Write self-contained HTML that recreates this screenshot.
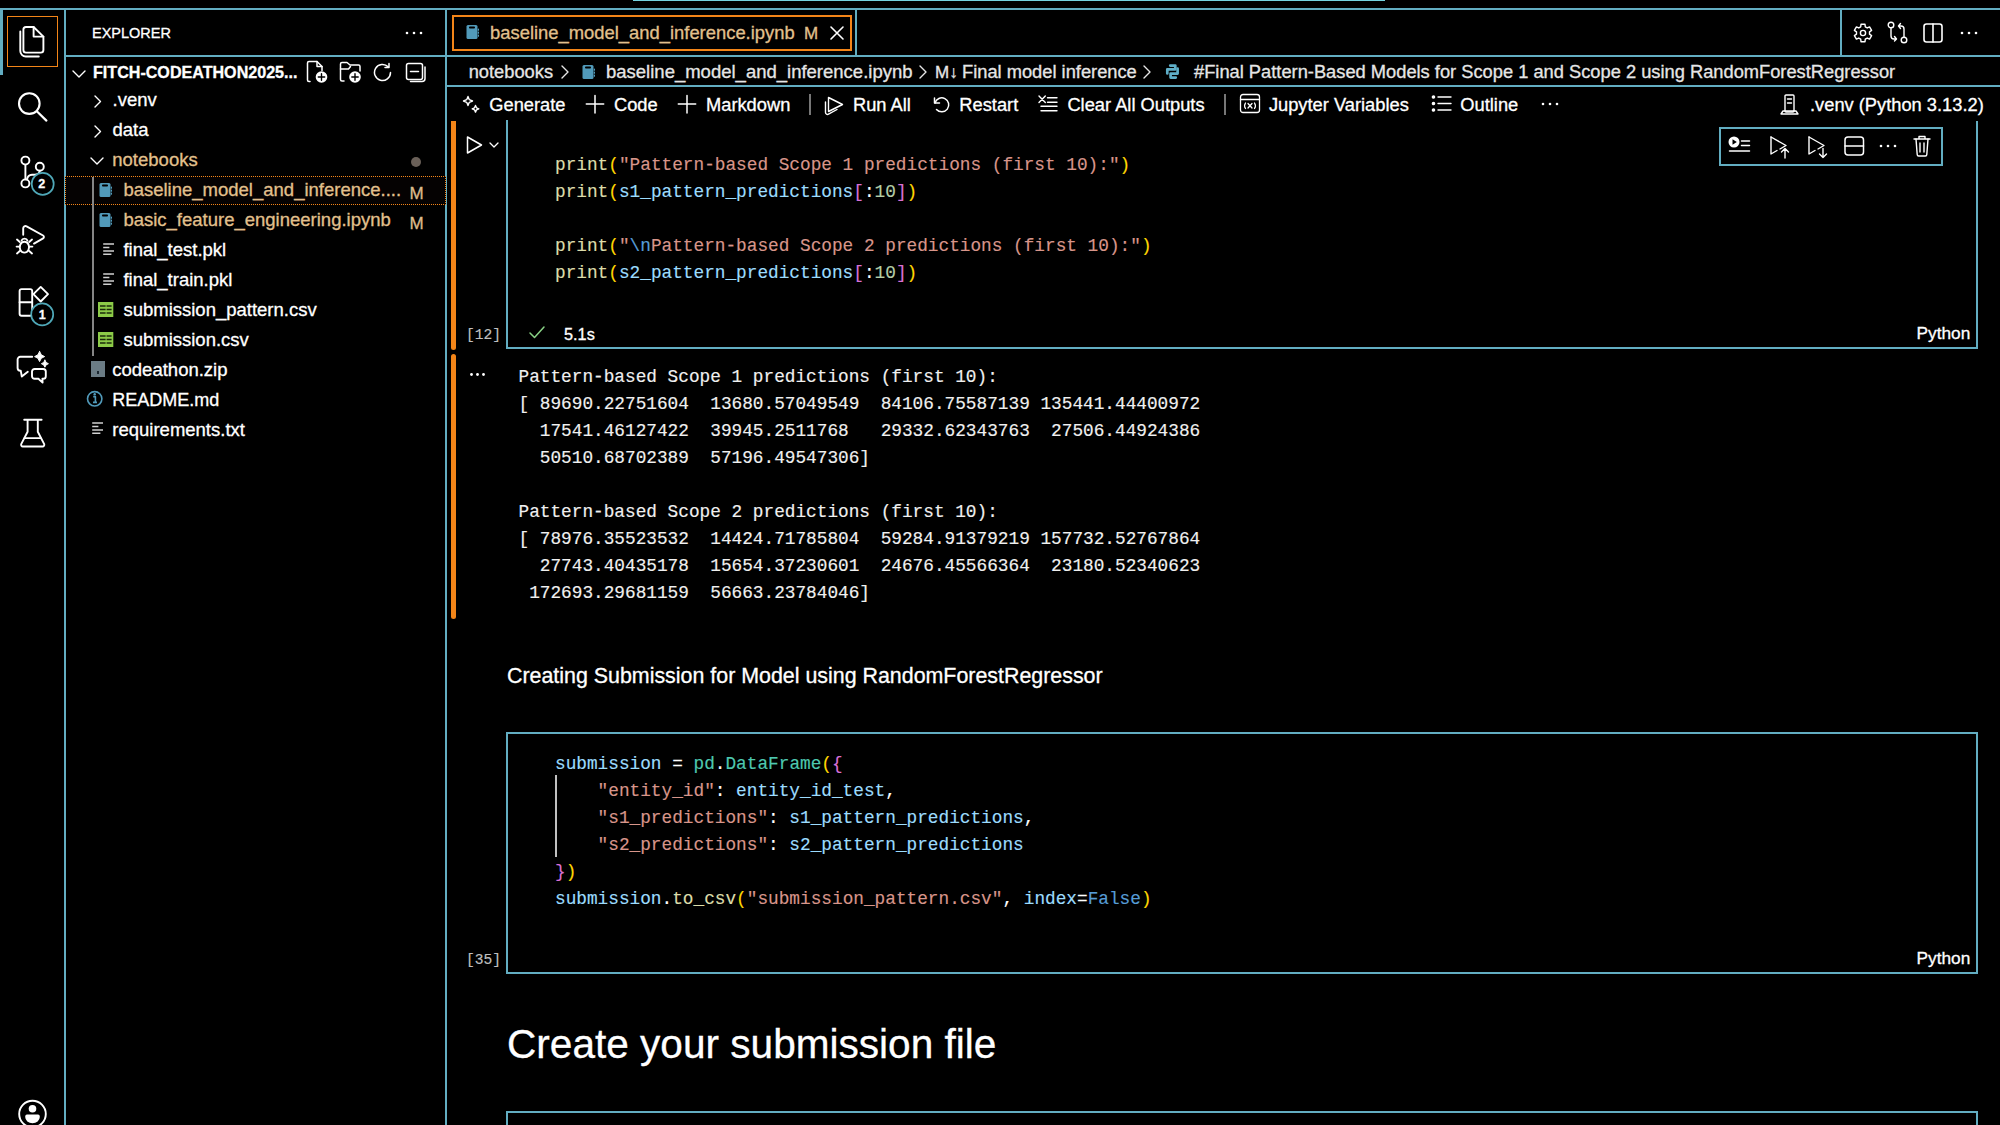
<!DOCTYPE html>
<html><head><meta charset="utf-8"><style>
html,body{margin:0;padding:0;width:2000px;height:1125px;overflow:hidden;background:#000;}
.t{position:absolute;white-space:pre;font-family:"Liberation Sans",sans-serif;line-height:1;-webkit-text-stroke:0.3px currentColor;}
.m{position:absolute;white-space:pre;font-family:"Liberation Mono",monospace;line-height:1;-webkit-text-stroke:0.15px currentColor;}
</style></head><body>
<div style="position:absolute;left:633px;top:0px;width:752px;height:1px;background:#75D3E0;"></div>
<div style="position:absolute;left:0px;top:8px;width:2000px;height:2px;background:#62ADC1;"></div>
<div style="position:absolute;left:64px;top:8px;width:2px;height:1117px;background:#62ADC1;"></div>
<div style="position:absolute;left:445px;top:8px;width:2px;height:1117px;background:#62ADC1;"></div>
<div style="position:absolute;left:64px;top:55px;width:1936px;height:2px;background:#62ADC1;"></div>
<div style="position:absolute;left:855px;top:8px;width:2px;height:48px;background:#62ADC1;"></div>
<div style="position:absolute;left:1840px;top:8px;width:2px;height:48px;background:#62ADC1;"></div>
<div style="position:absolute;left:445px;top:85px;width:1555px;height:2px;background:#62ADC1;"></div>
<div style="position:absolute;left:0px;top:9px;width:3px;height:66px;background:#62ADC1;"></div>
<div style="position:absolute;left:7px;top:16px;width:49px;height:49px;border:1.6px solid #F38518"></div>
<svg style="position:absolute;left:0;top:0" width="64" height="1125" viewBox="0 0 64 1125" fill="none" stroke="#fff" stroke-width="1.9" stroke-linecap="round" stroke-linejoin="round"><path d="M26 27h7.6l9.8 9.6V50a2.6 2.6 0 0 1-2.6 2.6H26a2.6 2.6 0 0 1-2.6-2.6V29.6A2.6 2.6 0 0 1 26 27z"/><path d="M33.6 27v9.6h9.8"/><path d="M20.3 31.5v19.5a5.5 5.5 0 0 0 5.5 5.5h13"/><circle cx="29.3" cy="103.6" r="10.3" stroke-width="2.1"/><path d="M36.8 111.2l9.6 9.4" stroke-width="2.2"/><circle cx="25.4" cy="160.6" r="4"/><circle cx="39.8" cy="166.7" r="4"/><circle cx="25.4" cy="183.4" r="4"/><path d="M25.4 164.6v14.8"/><path d="M27 179.5c0.5-3 2-4.5 5-4.7h2.5c3 0 5-1.5 5.3-4.1"/><path d="M23.2 234.8v-6.5a2.3 2.3 0 0 1 3.4-2l16.5 9.2a1.6 1.6 0 0 1 0 2.8l-9.1 5.3"/><path d="M24.4 241.8a4.7 5.4 0 1 0 .01 0z"/><path d="M21.6 240.5a3 2.5 0 0 1 5.8 0"/><path d="M17 239.6l2.8 2.3M16.6 246.6h3M17 253.4l2.8-2.3M32 239.6l-2.8 2.3M32.4 246.6h-3M32 253.4l-2.8-2.3"/><path d="M21.6 289.1h8.6a2 2 0 0 1 2 2v22.7a2 2 0 0 1-2 2H21.6a2 2 0 0 1-2-2V291.1a2 2 0 0 1 2-2z"/><path d="M19.6 302.2h12.6"/><path d="M40.7 286.9l7.3 7.3-7.3 7.3-7.3-7.3z"/><path d="M32.2 356.8H20.3a2.7 2.7 0 0 0-2.7 2.7v8.6a2.7 2.7 0 0 0 2.7 2.7h.5l1 5.8 6-4.8"/><path d="M34.6 369h8.6a2.6 2.6 0 0 1 2.6 2.6v4.6a2.6 2.6 0 0 1-2.6 2.6h-.8l.2 3.8-4.2-3.8h-3.8a2.6 2.6 0 0 1-2.6-2.6v-4.6a2.6 2.6 0 0 1 2.6-2.6z"/><path d="M39.6 351.6q.9 4.1 5 5-4.1.9-5 5-.9-4.1-5-5 4.1-.9 5-5z" fill="#fff" stroke-width="1"/><path d="M44.9 360.2q.6 2.9 3.5 3.5-2.9.6-3.5 3.5-.6-2.9-3.5-3.5 2.9-.6 3.5-3.5z" fill="#fff" stroke-width="1"/><path d="M24.2 419.8h17.4"/><path d="M27.6 420v11.8l-6.4 12.3a1.8 1.8 0 0 0 1.6 2.4h19.8a1.8 1.8 0 0 0 1.6-2.4l-6.4-12.3V420"/><path d="M24.6 438.1h16"/><circle cx="32.5" cy="1114" r="13.3"/><circle cx="32.5" cy="1108.8" r="3.8" fill="#fff" stroke="none"/><path d="M27 1114.6h11a1.8 1.8 0 0 1 1.8 1.8v.6a7.3 6.2 0 0 1-14.6 0v-.6a1.8 1.8 0 0 1 1.8-1.8z" fill="#fff" stroke="none"/><circle cx="42.7" cy="183.9" r="11" fill="#000" stroke="#4FA8B8" stroke-width="1.7"/><circle cx="42.2" cy="314.4" r="11" fill="#000" stroke="#4FA8B8" stroke-width="1.7"/></svg>
<div class="t" style="left:38.2px;top:178.02px;font-size:12.5px;color:#fff;font-weight:bold;">2</div>
<div class="t" style="left:38.7px;top:308.62px;font-size:12.5px;color:#fff;font-weight:bold;">1</div>
<div class="t" style="left:92px;top:25.93px;font-size:14.5px;color:#fff;font-weight:normal;">EXPLORER</div>
<svg style="position:absolute;left:402px;top:28px;" width="24" height="10" viewBox="0 0 24 10" fill="none" stroke="#fff" stroke-width="1.5" stroke-linecap="round" stroke-linejoin="round"><circle cx="5" cy="5" r="1.3" fill="#fff" stroke="none"/><circle cx="12" cy="5" r="1.3" fill="#fff" stroke="none"/><circle cx="19" cy="5" r="1.3" fill="#fff" stroke="none"/></svg>
<svg style="position:absolute;left:70px;top:65.5px;" width="18" height="16" viewBox="0 0 18 16" fill="none" stroke="#fff" stroke-width="1.4" stroke-linecap="round" stroke-linejoin="round"><path d="M3 5l6 6 6-6"/></svg>
<div class="t" style="left:93px;top:63.87px;font-size:16.1px;color:#fff;font-weight:bold;">FITCH-CODEATHON2025...</div>
<svg style="position:absolute;left:305px;top:59px;" width="24" height="26" viewBox="0 0 24 26" fill="none" stroke="#fff" stroke-width="1.5" stroke-linecap="round" stroke-linejoin="round"><path d="M5 22.5H4a1.5 1.5 0 0 1-1.5-1.5V4A1.5 1.5 0 0 1 4 2.5h8l5 5v4"/><path d="M12 2.5v5h5"/><circle cx="16.5" cy="18" r="5.8" fill="#fff" stroke="none"/><path d="M16.5 14.8v6.4M13.3 18h6.4" stroke="#000" stroke-width="1.4"/></svg>
<svg style="position:absolute;left:338px;top:59px;" width="26" height="26" viewBox="0 0 26 26" fill="none" stroke="#fff" stroke-width="1.5" stroke-linecap="round" stroke-linejoin="round"><path d="M6 22H4a1.5 1.5 0 0 1-1.5-1.5V5A1.5 1.5 0 0 1 4 3.5h5l3 2.5h8.5A1.5 1.5 0 0 1 22 7.5V12"/><path d="M2.5 10h8l2-2.5"/><circle cx="17" cy="18" r="5.8" fill="#fff" stroke="none"/><path d="M17 14.8v6.4M13.8 18h6.4" stroke="#000" stroke-width="1.4"/></svg>
<svg style="position:absolute;left:372.5px;top:60.5px;" width="22" height="24" viewBox="0 0 22 24" fill="none" stroke="#fff" stroke-width="1.5" stroke-linecap="round" stroke-linejoin="round"><path d="M17.5 11.5a8 8 0 1 1-2.3-5.6"/><path d="M16 2.5v4h-4"/></svg>
<svg style="position:absolute;left:404px;top:60.5px;" width="24" height="24" viewBox="0 0 24 24" fill="none" stroke="#fff" stroke-width="1.5" stroke-linecap="round" stroke-linejoin="round"><rect x="2.5" y="2.5" width="16" height="16" rx="2"/><path d="M21 6v11.5a3 3 0 0 1-3 3H6.5"/><path d="M6.5 10.5h8"/></svg>
<svg style="position:absolute;left:92px;top:94.1px;" width="12" height="14" viewBox="0 0 12 14" fill="none" stroke="#fff" stroke-width="1.4" stroke-linecap="round" stroke-linejoin="round"><path d="M3 2l5.5 5.5L3 13"/></svg>
<div class="t" style="left:112.5px;top:90.94px;font-size:18.5px;color:#fff;font-weight:normal;">.venv</div>
<svg style="position:absolute;left:92px;top:124.1px;" width="12" height="14" viewBox="0 0 12 14" fill="none" stroke="#fff" stroke-width="1.4" stroke-linecap="round" stroke-linejoin="round"><path d="M3 2l5.5 5.5L3 13"/></svg>
<div class="t" style="left:112.5px;top:120.94px;font-size:18.5px;color:#fff;font-weight:normal;">data</div>
<svg style="position:absolute;left:89px;top:155.1px;" width="16" height="12" viewBox="0 0 16 12" fill="none" stroke="#fff" stroke-width="1.4" stroke-linecap="round" stroke-linejoin="round"><path d="M2 3l6 6 6-6"/></svg>
<div class="t" style="left:112.3px;top:150.94px;font-size:18.5px;color:#E2C08D;font-weight:normal;">notebooks</div>
<div style="position:absolute;left:411px;top:157px;width:10px;height:10px;border-radius:50%;background:#6a6058"></div>
<div style="position:absolute;left:65px;top:176px;width:379px;height:27px;border-top:1.5px dotted #F38518;border-bottom:1.5px dotted #F38518;border-left:1px dotted #F38518;border-right:1px dotted #F38518;background:#050202"></div>
<div style="position:absolute;left:92px;top:177px;width:2px;height:179px;background:#858585;"></div>
<svg style="position:absolute;left:99px;top:182px;" width="14" height="16" viewBox="0 0 14 16" fill="none" stroke="#fff" stroke-width="1.5" stroke-linecap="round" stroke-linejoin="round"><rect x="0.5" y="1" width="11" height="14" rx="1.5" fill="#519ABA" stroke="none"/><rect x="3" y="2.6" width="6" height="1.8" rx="0.9" fill="#000" stroke="none"/><path d="M12.4 5v1.2M12.4 8v1.2M12.4 11v1.2" stroke="#519ABA" stroke-width="1.2"/></svg>
<div class="t" style="left:123.4px;top:180.94px;font-size:18.5px;color:#E2C08D;font-weight:normal;">baseline_model_and_inference....</div>
<div class="t" style="left:409.5px;top:184.71px;font-size:17px;color:#DDBB8C;font-weight:normal;">M</div>
<svg style="position:absolute;left:99px;top:212px;" width="14" height="16" viewBox="0 0 14 16" fill="none" stroke="#fff" stroke-width="1.5" stroke-linecap="round" stroke-linejoin="round"><rect x="0.5" y="1" width="11" height="14" rx="1.5" fill="#519ABA" stroke="none"/><rect x="3" y="2.6" width="6" height="1.8" rx="0.9" fill="#000" stroke="none"/><path d="M12.4 5v1.2M12.4 8v1.2M12.4 11v1.2" stroke="#519ABA" stroke-width="1.2"/></svg>
<div class="t" style="left:123.4px;top:210.94px;font-size:18.5px;color:#E2C08D;font-weight:normal;">basic_feature_engineering.ipynb</div>
<div class="t" style="left:409.5px;top:214.71px;font-size:17px;color:#DDBB8C;font-weight:normal;">M</div>
<svg style="position:absolute;left:103.2px;top:242.3px;" width="14" height="16" viewBox="0 0 14 16" fill="none" stroke="#fff" stroke-width="1.5" stroke-linecap="round" stroke-linejoin="round"><path d="M0.2 2h10.8M0.2 5.4h6.2M0.2 8.9h10.8M0.2 12.3h8.2" stroke="#d0d0d0" stroke-width="1.5" stroke-linecap="butt"/></svg>
<div class="t" style="left:123.4px;top:240.94px;font-size:18.5px;color:#fff;font-weight:normal;">final_test.pkl</div>
<svg style="position:absolute;left:103.2px;top:272.3px;" width="14" height="16" viewBox="0 0 14 16" fill="none" stroke="#fff" stroke-width="1.5" stroke-linecap="round" stroke-linejoin="round"><path d="M0.2 2h10.8M0.2 5.4h6.2M0.2 8.9h10.8M0.2 12.3h8.2" stroke="#d0d0d0" stroke-width="1.5" stroke-linecap="butt"/></svg>
<div class="t" style="left:123.4px;top:270.94px;font-size:18.5px;color:#fff;font-weight:normal;">final_train.pkl</div>
<svg style="position:absolute;left:98.2px;top:301.5px;" width="16" height="16" viewBox="0 0 16 16" fill="none" stroke="#fff" stroke-width="1.5" stroke-linecap="round" stroke-linejoin="round"><rect x="0" y="0" width="15.3" height="15" fill="#8CCB48" stroke="none"/><path d="M2 4h5.6M8.6 4h5M2 7.5h5.6M8.6 7.5h5M2 11h5.6M8.6 11h5" stroke="#1a2a0a" stroke-width="1.3" stroke-linecap="butt"/></svg>
<div class="t" style="left:123.4px;top:300.94px;font-size:18.5px;color:#fff;font-weight:normal;">submission_pattern.csv</div>
<svg style="position:absolute;left:98.2px;top:331.5px;" width="16" height="16" viewBox="0 0 16 16" fill="none" stroke="#fff" stroke-width="1.5" stroke-linecap="round" stroke-linejoin="round"><rect x="0" y="0" width="15.3" height="15" fill="#8CCB48" stroke="none"/><path d="M2 4h5.6M8.6 4h5M2 7.5h5.6M8.6 7.5h5M2 11h5.6M8.6 11h5" stroke="#1a2a0a" stroke-width="1.3" stroke-linecap="butt"/></svg>
<div class="t" style="left:123.4px;top:330.94px;font-size:18.5px;color:#fff;font-weight:normal;">submission.csv</div>
<div style="position:absolute;left:90.6px;top:360.7px;width:14px;height:16.2px;background:#6B7C85;"></div>
<div style="position:absolute;left:96.5px;top:371px;width:2.5px;height:3px;background:#1b2730;"></div>
<div class="t" style="left:112.3px;top:360.94px;font-size:18.5px;color:#fff;font-weight:normal;">codeathon.zip</div>
<svg style="position:absolute;left:84px;top:388px;" width="22" height="22" viewBox="0 0 22 22" fill="none" stroke="#fff" stroke-width="1.5" stroke-linecap="round" stroke-linejoin="round"><circle cx="10.7" cy="10.8" r="7.2" stroke="#519ABA" stroke-width="1.6"/><circle cx="10.7" cy="6.2" r="1.2" fill="#519ABA" stroke="none"/><path d="M9.2 8.6h2.2v5.6M9 14.4h4" stroke="#519ABA" stroke-width="1.6" stroke-linecap="butt"/></svg>
<div class="t" style="left:112.3px;top:391.36px;font-size:18.0px;color:#fff;font-weight:normal;">README.md</div>
<svg style="position:absolute;left:92.1px;top:421.4px;" width="14" height="16" viewBox="0 0 14 16" fill="none" stroke="#fff" stroke-width="1.5" stroke-linecap="round" stroke-linejoin="round"><path d="M0.2 2h10.8M0.2 5.4h6.2M0.2 8.9h10.8M0.2 12.3h8.2" stroke="#d0d0d0" stroke-width="1.5" stroke-linecap="butt"/></svg>
<div class="t" style="left:112.3px;top:420.94px;font-size:18.5px;color:#fff;font-weight:normal;">requirements.txt</div>
<div style="position:absolute;left:452px;top:15px;width:396px;height:32px;border:2px solid #F38518"></div>
<svg style="position:absolute;left:466px;top:24px;" width="14" height="16" viewBox="0 0 14 16" fill="none" stroke="#fff" stroke-width="1.5" stroke-linecap="round" stroke-linejoin="round"><rect x="0.5" y="1" width="11" height="14" rx="1.5" fill="#519ABA" stroke="none"/><rect x="3" y="2.6" width="6" height="1.8" rx="0.9" fill="#000" stroke="none"/><path d="M12.4 5v1.2M12.4 8v1.2M12.4 11v1.2" stroke="#519ABA" stroke-width="1.2"/></svg>
<div class="t" style="left:490px;top:23.92px;font-size:18.4px;color:#E2C08D;font-weight:normal;">baseline_model_and_inference.ipynb</div>
<div class="t" style="left:804px;top:24.61px;font-size:17px;color:#E2C08D;font-weight:normal;">M</div>
<svg style="position:absolute;left:828px;top:24px;" width="18" height="18" viewBox="0 0 18 18" fill="none" stroke="#fff" stroke-width="1.6" stroke-linecap="round" stroke-linejoin="round"><path d="M3 3l12 12M15 3L3 15"/></svg>
<svg style="position:absolute;left:1850.6px;top:21px;" width="24" height="24" viewBox="0 0 24 24" fill="none" stroke="#fff" stroke-width="1.4" stroke-linecap="round" stroke-linejoin="round"><path d="M9.74 5.80 L9.98 3.23 L14.02 3.23 L14.26 5.80 L16.24 6.94 L18.58 5.86 L20.61 9.37 L18.50 10.85 L18.50 13.15 L20.61 14.63 L18.58 18.14 L16.24 17.06 L14.26 18.20 L14.02 20.77 L9.98 20.77 L9.74 18.20 L7.76 17.06 L5.42 18.14 L3.39 14.63 L5.50 13.15 L5.50 10.85 L3.39 9.37 L5.42 5.86 L7.76 6.94Z"/><circle cx="12" cy="12" r="2.6"/></svg>
<svg style="position:absolute;left:1885px;top:20px;" width="26" height="26" viewBox="0 0 26 26" fill="none" stroke="#fff" stroke-width="1.4" stroke-linecap="round" stroke-linejoin="round"><circle cx="6" cy="5" r="2.8"/><circle cx="19" cy="20" r="2.8"/><path d="M6 8v8c0 2 1 3 3 3h2M9.5 16.5L11.5 19 9.5 21"/><path d="M19 17V9c0-2-1-3-3-3h-2M15.5 8.5L13.5 6l2-2.5"/></svg>
<svg style="position:absolute;left:1921px;top:21px;" width="24" height="24" viewBox="0 0 24 24" fill="none" stroke="#fff" stroke-width="1.6" stroke-linecap="round" stroke-linejoin="round"><rect x="3" y="3" width="18" height="18" rx="2.5"/><path d="M12 3v18"/></svg>
<svg style="position:absolute;left:1958px;top:28px;" width="24" height="10" viewBox="0 0 24 10" fill="none" stroke="#fff" stroke-width="1.5" stroke-linecap="round" stroke-linejoin="round"><circle cx="4" cy="5" r="1.3" fill="#fff" stroke="none"/><circle cx="11" cy="5" r="1.3" fill="#fff" stroke="none"/><circle cx="18" cy="5" r="1.3" fill="#fff" stroke="none"/></svg>
<div class="t" style="left:468.7px;top:62.71px;font-size:18.3px;color:#e6e6e6;font-weight:normal;">notebooks</div>
<svg style="position:absolute;left:559px;top:63px;" width="12" height="18" viewBox="0 0 12 18" fill="none" stroke="#e6e6e6" stroke-width="1.4" stroke-linecap="round" stroke-linejoin="round"><path d="M3 3l6 6-6 6"/></svg>
<svg style="position:absolute;left:582px;top:64px;" width="14" height="16" viewBox="0 0 14 16" fill="none" stroke="#fff" stroke-width="1.5" stroke-linecap="round" stroke-linejoin="round"><rect x="0.5" y="1" width="11" height="14" rx="1.5" fill="#519ABA" stroke="none"/><rect x="3" y="2.6" width="6" height="1.8" rx="0.9" fill="#000" stroke="none"/><path d="M12.4 5v1.2M12.4 8v1.2M12.4 11v1.2" stroke="#519ABA" stroke-width="1.2"/></svg>
<div class="t" style="left:606px;top:62.54px;font-size:18.5px;color:#e6e6e6;font-weight:normal;">baseline_model_and_inference.ipynb</div>
<svg style="position:absolute;left:917px;top:63px;" width="12" height="18" viewBox="0 0 12 18" fill="none" stroke="#e6e6e6" stroke-width="1.4" stroke-linecap="round" stroke-linejoin="round"><path d="M3 3l6 6-6 6"/></svg>
<div class="t" style="left:935px;top:63.81px;font-size:17px;color:#e6e6e6;font-weight:normal;">M&#8595;</div>
<div class="t" style="left:962px;top:62.71px;font-size:18.3px;color:#e6e6e6;font-weight:normal;">Final model inference</div>
<svg style="position:absolute;left:1141px;top:63px;" width="12" height="18" viewBox="0 0 12 18" fill="none" stroke="#e6e6e6" stroke-width="1.4" stroke-linecap="round" stroke-linejoin="round"><path d="M3 3l6 6-6 6"/></svg>
<svg style="position:absolute;left:1158px;top:58px;" width="30" height="28" viewBox="0 0 30 28" fill="none" stroke="#5FAFC8" stroke-width="2.7" stroke-linecap="round" stroke-linejoin="round"><path d="M9.3 15.5V11.3H17.3V7.6H12.2"/><path d="M19.6 10.6V15.6H12.6V19.6H17.8"/></svg>
<div class="t" style="left:1194px;top:62.71px;font-size:18.3px;color:#e6e6e6;font-weight:normal;">#Final Pattern-Based Models for Scope 1 and Scope 2 using RandomForestRegressor</div>
<svg style="position:absolute;left:460.5px;top:93.5px;" width="22" height="22" viewBox="0 0 22 22" fill="none" stroke="#fff" stroke-width="1.4" stroke-linecap="round" stroke-linejoin="round"><path d="M7 2.5l1.3 3.2 3.2 1.3-3.2 1.3L7 11.5 5.7 8.3 2.5 7l3.2-1.3z"/><path d="M14.5 11.5l1 2.3 2.3 1-2.3 1-1 2.3-1-2.3-2.3-1 2.3-1z"/></svg>
<div class="t" style="left:489.3px;top:96.01px;font-size:18.3px;color:#fff;font-weight:normal;">Generate</div>
<svg style="position:absolute;left:583.7px;top:92.5px;" width="22" height="22" viewBox="0 0 22 22" fill="none" stroke="#fff" stroke-width="1.5" stroke-linecap="round" stroke-linejoin="round"><path d="M11 2.5v17.5M2.3 11h17.4"/></svg>
<div class="t" style="left:614px;top:96.01px;font-size:18.3px;color:#fff;font-weight:normal;">Code</div>
<svg style="position:absolute;left:676.2px;top:92.5px;" width="22" height="22" viewBox="0 0 22 22" fill="none" stroke="#fff" stroke-width="1.5" stroke-linecap="round" stroke-linejoin="round"><path d="M11 2.5v17.5M2.3 11h17.4"/></svg>
<div class="t" style="left:706px;top:96.01px;font-size:18.3px;color:#fff;font-weight:normal;">Markdown</div>
<div style="position:absolute;left:809px;top:94px;width:2px;height:21px;background:#777;"></div>
<svg style="position:absolute;left:820px;top:90px;" width="28" height="28" viewBox="0 0 28 28" fill="none" stroke="#fff" stroke-width="1.4" stroke-linecap="round" stroke-linejoin="round"><path d="M8.5 7.5L22.5 14.5 8.5 21.5z"/><path d="M5.5 12v10.5a2 2 0 0 0 3 1.7l8.5-4.7"/></svg>
<div class="t" style="left:853px;top:96.01px;font-size:18.3px;color:#fff;font-weight:normal;">Run All</div>
<svg style="position:absolute;left:930px;top:93px;" width="22" height="22" viewBox="0 0 22 22" fill="none" stroke="#fff" stroke-width="1.5" stroke-linecap="round" stroke-linejoin="round"><path d="M4.5 5v5h5"/><path d="M5 10a7 7 0 1 1 1.5 6.5"/></svg>
<div class="t" style="left:959.3px;top:96.01px;font-size:18.3px;color:#fff;font-weight:normal;">Restart</div>
<svg style="position:absolute;left:1036px;top:91px;" width="24" height="24" viewBox="0 0 24 24" fill="none" stroke="#fff" stroke-width="1.4" stroke-linecap="round" stroke-linejoin="round"><path d="M3 5l6.3 6.5M9.3 5L3 11.5"/><path d="M11.5 6.8h9.5M11.5 11.3h9.5M5 15.2h16M5 19.8h16"/></svg>
<div class="t" style="left:1067.4px;top:96.01px;font-size:18.3px;color:#fff;font-weight:normal;">Clear All Outputs</div>
<div style="position:absolute;left:1224px;top:94px;width:2px;height:21px;background:#777;"></div>
<svg style="position:absolute;left:1239px;top:93px;" width="24" height="22" viewBox="0 0 24 22" fill="none" stroke="#fff" stroke-width="1.3" stroke-linecap="round" stroke-linejoin="round"><rect x="1.5" y="1.5" width="19" height="18" rx="2.5"/><path d="M1.5 6.5h19"/><path d="M6.5 10c-1 1.5-1 4 0 5.5M15.5 10c1 1.5 1 4 0 5.5M9 10.5l4 4.5M13 10.5l-4 4.5"/></svg>
<div class="t" style="left:1268.9px;top:96.01px;font-size:18.3px;color:#fff;font-weight:normal;">Jupyter Variables</div>
<svg style="position:absolute;left:1430px;top:93px;" width="24" height="22" viewBox="0 0 24 22" fill="none" stroke="#fff" stroke-width="1.4" stroke-linecap="round" stroke-linejoin="round"><circle cx="3.5" cy="4" r="1.1" fill="#fff"/><circle cx="3.5" cy="10.5" r="1.1" fill="#fff"/><circle cx="3.5" cy="17" r="1.1" fill="#fff"/><path d="M8 4h13M8 10.5h13M8 17h13"/></svg>
<div class="t" style="left:1460.3px;top:96.01px;font-size:18.3px;color:#fff;font-weight:normal;">Outline</div>
<svg style="position:absolute;left:1538px;top:99px;" width="24" height="10" viewBox="0 0 24 10" fill="none" stroke="#fff" stroke-width="1.5" stroke-linecap="round" stroke-linejoin="round"><circle cx="5" cy="5" r="1.3" fill="#fff" stroke="none"/><circle cx="12" cy="5" r="1.3" fill="#fff" stroke="none"/><circle cx="19" cy="5" r="1.3" fill="#fff" stroke="none"/></svg>
<svg style="position:absolute;left:1778px;top:93px;" width="24" height="24" viewBox="0 0 24 24" fill="none" stroke="#fff" stroke-width="1.4" stroke-linecap="round" stroke-linejoin="round"><rect x="7" y="2" width="9" height="17" rx="1"/><path d="M9.5 6h4M9.5 10h4"/><path d="M3 21h17l-2-3H5z"/></svg>
<div class="t" style="left:1810px;top:96.01px;font-size:18.3px;color:#fff;font-weight:normal;">.venv (Python 3.13.2)</div>
<div style="position:absolute;left:451px;top:121px;width:5px;height:229px;background:#F38518;border-radius:0 0 3px 3px"></div>
<div style="position:absolute;left:451px;top:354px;width:5px;height:265px;background:#F38518;border-radius:3px"></div>
<div style="position:absolute;left:506px;top:120px;width:2px;height:229px;background:#62ADC1;"></div>
<div style="position:absolute;left:1976px;top:121px;width:2px;height:228px;background:#62ADC1;"></div>
<div style="position:absolute;left:506px;top:347px;width:1472px;height:2px;background:#62ADC1;"></div>
<svg style="position:absolute;left:462px;top:133px;" width="24" height="24" viewBox="0 0 24 24" fill="none" stroke="#fff" stroke-width="1.5" stroke-linecap="round" stroke-linejoin="round"><path d="M5.5 4l14 8-14 8z"/></svg>
<svg style="position:absolute;left:487px;top:139px;" width="14" height="12" viewBox="0 0 14 12" fill="none" stroke="#fff" stroke-width="1.3" stroke-linecap="round" stroke-linejoin="round"><path d="M3 4l4 4 4-4"/></svg>
<div class="m" style="left:555px;top:156.89px;font-size:17.76px;color:#fff;"><span style="color:#DCDCAA">print</span><span style="color:#FFD700">(</span><span style="color:#D8958A">"Pattern-based Scope 1 predictions (first 10):"</span><span style="color:#FFD700">)</span></div>
<div class="m" style="left:555px;top:183.89px;font-size:17.76px;color:#fff;"><span style="color:#DCDCAA">print</span><span style="color:#FFD700">(</span><span style="color:#9CDCFE">s1_pattern_predictions</span><span style="color:#DA70D6">[</span><span style="color:#FFFFFF">:</span><span style="color:#B5CEA8">10</span><span style="color:#DA70D6">]</span><span style="color:#FFD700">)</span></div>
<div class="m" style="left:555px;top:237.89px;font-size:17.76px;color:#fff;"><span style="color:#DCDCAA">print</span><span style="color:#FFD700">(</span><span style="color:#D8958A">"</span><span style="color:#569CD6">\n</span><span style="color:#D8958A">Pattern-based Scope 2 predictions (first 10):"</span><span style="color:#FFD700">)</span></div>
<div class="m" style="left:555px;top:264.89px;font-size:17.76px;color:#fff;"><span style="color:#DCDCAA">print</span><span style="color:#FFD700">(</span><span style="color:#9CDCFE">s2_pattern_predictions</span><span style="color:#DA70D6">[</span><span style="color:#FFFFFF">:</span><span style="color:#B5CEA8">10</span><span style="color:#DA70D6">]</span><span style="color:#FFD700">)</span></div>
<div class="m" style="left:466px;top:327.81px;font-size:14.6px;color:#c0c0c0;">[12]</div>
<svg style="position:absolute;left:527px;top:323px;" width="20" height="18" viewBox="0 0 20 18" fill="none" stroke="#89D185" stroke-width="1.5" stroke-linecap="round" stroke-linejoin="round"><path d="M3 10l4.5 4.5L17 4"/></svg>
<div class="t" style="left:564px;top:325.70px;font-size:16.3px;color:#fff;font-weight:normal;">5.1s</div>
<div class="t" style="left:1916.5px;top:324.86px;font-size:17.3px;color:#fff;font-weight:normal;">Python</div>
<div style="position:absolute;left:1719px;top:127px;width:220px;height:35px;border:2px solid #62ADC1;background:#000"></div>
<svg style="position:absolute;left:1726px;top:133px;" width="28" height="26" viewBox="0 0 28 26" fill="none" stroke="#fff" stroke-width="1.5" stroke-linecap="round" stroke-linejoin="round"><circle cx="8" cy="9" r="5.5" fill="#fff" stroke="none"/><path d="M6.5 6.3v5.4l4.3-2.7z" fill="#000" stroke="none"/><path d="M15.5 8h8M15.5 12.5h8M3.5 18h20" /></svg>
<svg style="position:absolute;left:1767px;top:133px;" width="28" height="28" viewBox="0 0 28 28" fill="none" stroke="#fff" stroke-width="1.4" stroke-linecap="round" stroke-linejoin="round"><path d="M4 4l15 8.5-6 3.5"/><path d="M4 4v17l6-3.5"/><path d="M18 25v-9M14.5 19l3.5-3.5 3.5 3.5"/></svg>
<svg style="position:absolute;left:1805px;top:133px;" width="28" height="28" viewBox="0 0 28 28" fill="none" stroke="#fff" stroke-width="1.4" stroke-linecap="round" stroke-linejoin="round"><path d="M4 4l15 8.5-6 3.5"/><path d="M4 4v17l6-3.5"/><path d="M18 15.5v9M14.5 21l3.5 3.5 3.5-3.5"/></svg>
<svg style="position:absolute;left:1842px;top:134px;" width="24" height="24" viewBox="0 0 24 24" fill="none" stroke="#fff" stroke-width="1.5" stroke-linecap="round" stroke-linejoin="round"><rect x="3" y="3" width="18.5" height="18" rx="3"/><path d="M3 12h18.5"/></svg>
<svg style="position:absolute;left:1876px;top:141px;" width="24" height="10" viewBox="0 0 24 10" fill="none" stroke="#fff" stroke-width="1.5" stroke-linecap="round" stroke-linejoin="round"><circle cx="5" cy="5" r="1.3" fill="#fff" stroke="none"/><circle cx="12" cy="5" r="1.3" fill="#fff" stroke="none"/><circle cx="19" cy="5" r="1.3" fill="#fff" stroke="none"/></svg>
<svg style="position:absolute;left:1910px;top:133px;" width="24" height="26" viewBox="0 0 24 26" fill="none" stroke="#fff" stroke-width="1.4" stroke-linecap="round" stroke-linejoin="round"><path d="M4 6h16M9 6V3.5h6V6"/><path d="M6 6l1.2 15.5A1.5 1.5 0 0 0 8.7 23h6.6a1.5 1.5 0 0 0 1.5-1.5L18 6"/><path d="M10 10v9M14 10v9"/></svg>
<svg style="position:absolute;left:466px;top:369px;" width="24" height="10" viewBox="0 0 24 10" fill="none" stroke="#fff" stroke-width="1.5" stroke-linecap="round" stroke-linejoin="round"><circle cx="5.5" cy="5.5" r="1.4" fill="#fff" stroke="none"/><circle cx="11.5" cy="5.5" r="1.4" fill="#fff" stroke="none"/><circle cx="17.5" cy="5.5" r="1.4" fill="#fff" stroke="none"/></svg>
<div class="m" style="left:518.5px;top:369.39px;font-size:17.76px;color:#f0f0f0;">Pattern-based Scope 1 predictions (first 10):</div>
<div class="m" style="left:518.5px;top:396.39px;font-size:17.76px;color:#f0f0f0;">[ 89690.22751604  13680.57049549  84106.75587139 135441.44400972</div>
<div class="m" style="left:518.5px;top:423.39px;font-size:17.76px;color:#f0f0f0;">  17541.46127422  39945.2511768   29332.62343763  27506.44924386</div>
<div class="m" style="left:518.5px;top:450.39px;font-size:17.76px;color:#f0f0f0;">  50510.68702389  57196.49547306]</div>
<div class="m" style="left:518.5px;top:504.39px;font-size:17.76px;color:#f0f0f0;">Pattern-based Scope 2 predictions (first 10):</div>
<div class="m" style="left:518.5px;top:531.39px;font-size:17.76px;color:#f0f0f0;">[ 78976.35523532  14424.71785804  59284.91379219 157732.52767864</div>
<div class="m" style="left:518.5px;top:558.39px;font-size:17.76px;color:#f0f0f0;">  27743.40435178  15654.37230601  24676.45566364  23180.52340623</div>
<div class="m" style="left:518.5px;top:585.39px;font-size:17.76px;color:#f0f0f0;"> 172693.29681159  56663.23784046]</div>
<div class="t" style="left:507px;top:665.58px;font-size:21.4px;color:#fff;font-weight:normal;">Creating Submission for Model using RandomForestRegressor</div>
<div style="position:absolute;left:506px;top:732px;width:2px;height:242px;background:#62ADC1;"></div>
<div style="position:absolute;left:1976px;top:732px;width:2px;height:242px;background:#62ADC1;"></div>
<div style="position:absolute;left:506px;top:732px;width:1472px;height:2px;background:#62ADC1;"></div>
<div style="position:absolute;left:506px;top:972px;width:1472px;height:2px;background:#62ADC1;"></div>
<div class="m" style="left:555px;top:756.39px;font-size:17.76px;color:#fff;"><span style="color:#9CDCFE">submission</span><span style="color:#FFFFFF"> = </span><span style="color:#4EC9B0">pd</span><span style="color:#FFFFFF">.</span><span style="color:#4EC9B0">DataFrame</span><span style="color:#FFD700">(</span><span style="color:#DA70D6">{</span></div>
<div class="m" style="left:555px;top:783.39px;font-size:17.76px;color:#fff;"><span style="color:#FFFFFF">    </span><span style="color:#D8958A">"entity_id"</span><span style="color:#FFFFFF">: </span><span style="color:#9CDCFE">entity_id_test</span><span style="color:#FFFFFF">,</span></div>
<div class="m" style="left:555px;top:810.39px;font-size:17.76px;color:#fff;"><span style="color:#FFFFFF">    </span><span style="color:#D8958A">"s1_predictions"</span><span style="color:#FFFFFF">: </span><span style="color:#9CDCFE">s1_pattern_predictions</span><span style="color:#FFFFFF">,</span></div>
<div class="m" style="left:555px;top:837.39px;font-size:17.76px;color:#fff;"><span style="color:#FFFFFF">    </span><span style="color:#D8958A">"s2_predictions"</span><span style="color:#FFFFFF">: </span><span style="color:#9CDCFE">s2_pattern_predictions</span></div>
<div class="m" style="left:555px;top:864.39px;font-size:17.76px;color:#fff;"><span style="color:#DA70D6">}</span><span style="color:#FFD700">)</span></div>
<div class="m" style="left:555px;top:891.39px;font-size:17.76px;color:#fff;"><span style="color:#9CDCFE">submission</span><span style="color:#FFFFFF">.</span><span style="color:#DCDCAA">to_csv</span><span style="color:#FFD700">(</span><span style="color:#D8958A">"submission_pattern.csv"</span><span style="color:#FFFFFF">, </span><span style="color:#9CDCFE">index</span><span style="color:#FFFFFF">=</span><span style="color:#569CD6">False</span><span style="color:#FFD700">)</span></div>
<div style="position:absolute;left:554.5px;top:775px;width:2px;height:82px;background:#c0c0c0;"></div>
<div class="m" style="left:466px;top:952.81px;font-size:14.6px;color:#c0c0c0;">[35]</div>
<div class="t" style="left:1916.5px;top:949.86px;font-size:17.3px;color:#fff;font-weight:normal;">Python</div>
<div class="t" style="left:507px;top:1023.63px;font-size:40.6px;color:#fff;font-weight:normal;">Create your submission file</div>
<div style="position:absolute;left:506px;top:1111px;width:2px;height:14px;background:#62ADC1;"></div>
<div style="position:absolute;left:1976px;top:1111px;width:2px;height:14px;background:#62ADC1;"></div>
<div style="position:absolute;left:506px;top:1111px;width:1472px;height:2px;background:#62ADC1;"></div>
</body></html>
